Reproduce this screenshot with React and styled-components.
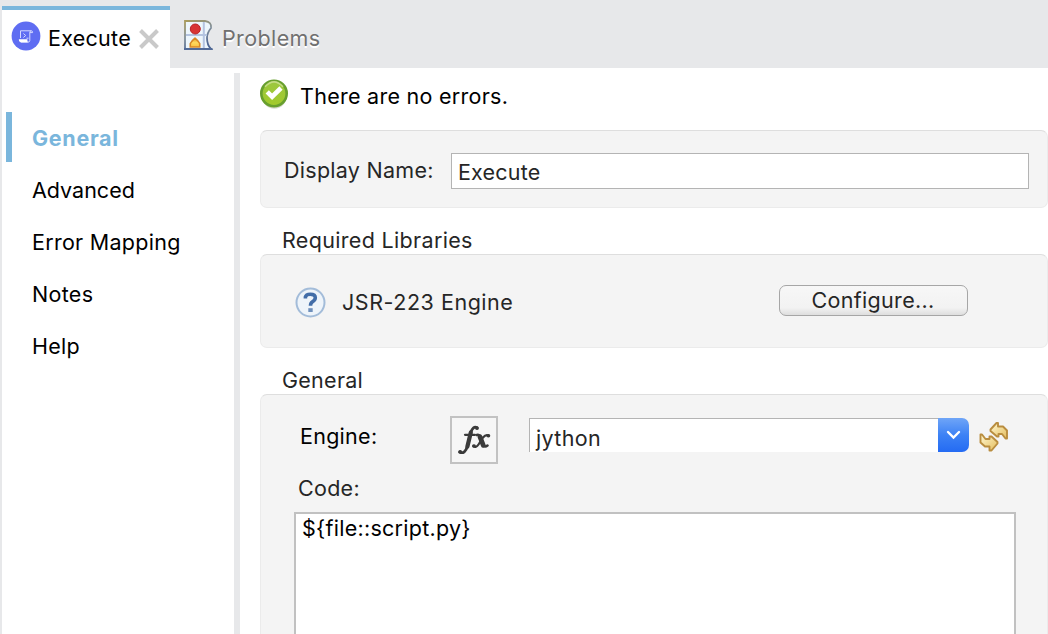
import React from "react";
import styled, { createGlobalStyle } from "styled-components";

const GlobalStyle = createGlobalStyle`
  * { box-sizing: border-box; }
  body { margin: 0; background: #fff; overflow: hidden; }
`;

const Window = styled.div`
  display: flex;
  flex-direction: column;
  width: 1048px;
  height: 634px;
  overflow: hidden;
  border-left: 2px solid #e7e8ea;
  background: #fff;
  font-family: Inter, "Liberation Sans", sans-serif;
  font-size: 21.5px;
  line-height: 26px;
  color: #262626;
`;

const Text = styled.span`
  white-space: nowrap;
  color: ${(p) => p.$color || "inherit"};
  font-weight: ${(p) => (p.$bold ? 700 : 400)};
  letter-spacing: ${(p) => p.$track ?? 0.27}px;
`;

const TabBar = styled.div`
  display: flex;
  flex: none;
  height: 68px;
  padding-top: 6px;
  background: #e7e8ea;
`;

const Tab = styled.div`
  display: flex;
  align-items: flex-start;
  width: ${(p) => (p.$active ? 168 : 200)}px;
  padding: ${(p) => (p.$active ? "11px 0 0 9px" : "13px 0 0 13px")};
  border-top: ${(p) => (p.$active ? "4px solid #7ab6dc" : "0")};
  background: ${(p) => (p.$active ? "#fff" : "transparent")};
  text-shadow: ${(p) => (p.$active ? "none" : "0 2px 0 #fff")};
`;

const TabText = styled(Text)`
  padding: ${(p) => p.$pad};
`;

const CloseIcon = styled.svg`
  flex: none;
  margin: 8px 0 0 8px;
`;

const Body = styled.div`
  display: flex;
  flex: 1;
  min-height: 0;
`;

const Sidebar = styled.nav`
  display: flex;
  flex-direction: column;
  gap: 2px;
  width: 232px;
  padding: 44px 0 0 4px;
`;

const NavItem = styled.div`
  display: flex;
  align-items: center;
  height: 50px;
  padding: 2px 0 0 20px;
  border-left: 6px solid ${(p) => (p.$active ? "#7ab6dc" : "transparent")};
  color: ${(p) => (p.$active ? "#7ab6dc" : "#000")};
`;

const Divider = styled.div`
  width: 6px;
  margin-top: 5px;
  background: #e7e8ea;
`;

const Main = styled.main`
  flex: 1;
  min-width: 0;
  padding: 10px 0 0 20px;
`;

const Status = styled.div`
  display: flex;
  align-items: flex-start;
  gap: 11px;
  height: 52px;
  color: #000;
`;

const StatusText = styled(Text)`
  padding-top: 5px;
`;

const Panel = styled.section`
  height: ${(p) => p.$height}px;
  border: 1px solid #ebebeb;
  border-top-color: #dedede;
  border-radius: 7px;
  background: #f4f4f4;
`;

const PanelTitle = styled.h2`
  display: flex;
  align-items: flex-end;
  height: 46px;
  margin: 0;
  padding: 0 0 1px 22px;
  font-size: inherit;
`;

const Row = styled.div`
  display: flex;
  align-items: flex-start;
  padding: ${(p) => p.$pad};
`;

const Cell = styled.div`
  display: flex;
  flex: none;
  width: ${(p) => p.$width}px;
  padding-top: ${(p) => p.$top || 0}px;
`;

const Field = styled.div`
  width: 578px;
  height: 36px;
  padding: 5px 6px;
  border: 1px solid #b4b4b4;
  background: #fff;
`;

const PushButton = styled.button`
  display: flex;
  align-items: center;
  justify-content: center;
  width: 189px;
  height: 31px;
  padding: 0 1px 1px 0;
  border: 1px solid #a6a6a6;
  border-radius: 7px;
  background: linear-gradient(#f7f7f7 0%, #f2f2f2 75%, #dedede 100%);
  font: inherit;
  color: #262626;
`;

const FxButton = styled.div`
  display: flex;
  width: 48px;
  height: 48px;
  border: 2px solid #c2c2c2;
  background: #f6f6f6;
`;

const Combo = styled.div`
  display: flex;
  width: 440px;
  height: 34px;
`;

const ComboText = styled.div`
  flex: 1;
  padding: 6px 0 0 6px;
  border-top: 1px solid #b4b4b4;
  border-left: 1px solid #b4b4b4;
  background: #fff;
`;

const ComboArrow = styled.div`
  display: flex;
  align-items: center;
  justify-content: center;
  width: 31px;
  border-radius: 0 7px 7px 0;
  background: linear-gradient(#6fa5f7, #3d82f5 50%, #246bf3);
`;

const CodeArea = styled.div`
  width: 722px;
  height: 140px;
  margin: 11px 0 0 33px;
  padding: 1px 6px;
  border: 2px solid #c1c1c1;
  background: #fff;
  color: #000;
`;

const ScriptIcon = () => (
  <svg width="30" height="30" viewBox="0 0 30 30">
    <circle cx="15" cy="15" r="14.4" fill="#5f6df2" />
    <g fill="none" stroke="#d5d9ff" strokeWidth="1">
      <path d="M9.5 17V9.8h10.8q-1.5 0-1.5 1.7v8q0 1.7-2 1.7H10" />
      <path d="M20.3 9.8q1.3 0 1.3 1.8h-2.8M12.4 12.5l2.3 2-2.3 2M15.5 17.2h2" />
    </g>
    <path d="M7.8 18.3h8.6v1.5q0 1.2 1 1.5H9.2q-1.4-.4-1.4-3z" fill="#fff" />
  </svg>
);

const ProblemsIcon = () => (
  <svg width="31" height="32" viewBox="0 0 31 32">
    <defs>
      <linearGradient id="edge" x1="0" y1="0" x2="0.4" y2="1">
        <stop offset="0" stopColor="#a99b5c" />
        <stop offset="0.55" stopColor="#7f8d9a" />
        <stop offset="1" stopColor="#4f6794" />
      </linearGradient>
      <linearGradient id="warn" x1="0" y1="0" x2="0" y2="1">
        <stop offset="0" stopColor="#e39a2a" />
        <stop offset="0.5" stopColor="#ffd95e" />
        <stop offset="1" stopColor="#fbc240" />
      </linearGradient>
    </defs>
    <path d="M2 2H22Q29 3 28 9Q24 14 24 19Q24 26 28 30H2Z" fill="#edf6fc" stroke="url(#edge)" strokeWidth="1.8" />
    <path d="M3 16H24M20.8 3V29" stroke="#b4c4e0" strokeWidth="2" />
    <path d="M1 30H29.5" stroke="#526a97" strokeWidth="2" />
    <circle cx="12.3" cy="10" r="5" fill="#d83434" stroke="#b82228" />
    <path d="M7.3 28V24.5Q8.6 22 12 19.2Q15.4 22 16.7 24.5V28Z" fill="url(#warn)" stroke="#d98826" strokeWidth="1.6" />
  </svg>
);

const CheckIcon = () => (
  <svg width="29" height="31" viewBox="0 0 29 31">
    <defs>
      <linearGradient id="green" x1="0" y1="0" x2="0" y2="1">
        <stop offset="0" stopColor="#9bc740" />
        <stop offset="1" stopColor="#a2ca2b" />
      </linearGradient>
    </defs>
    <ellipse cx="14.3" cy="17.8" rx="12.5" ry="13" fill="#d7d9d0" />
    <circle cx="14" cy="15.5" r="12.7" fill="url(#green)" stroke="#689f2e" strokeWidth="2.6" />
    <path d="M5 8.8Q14-1 23 8.8" fill="none" stroke="#c5dd83" strokeWidth="1.6" />
    <path d="M7.2 13.8l4.9 4.9L21 10" fill="none" stroke="#fff" strokeWidth="4.6" />
  </svg>
);

const HelpIcon = () => (
  <svg width="31" height="31" viewBox="0 0 31 31">
    <circle cx="15.5" cy="15.5" r="14" fill="#eef4fa" stroke="#a3bcd9" strokeWidth="2" />
    <path d="M10.4 11.5V10Q11 7.2 15.3 7.2Q20.3 7.2 20.3 10.8Q20.3 13 17.5 14.7Q15.5 16 15.5 18.8" fill="none" stroke="#426da8" strokeWidth="3.6" />
    <path d="M15.5 21.2v3.8" stroke="#6e8fbb" strokeWidth="4.4" />
  </svg>
);

const FxIcon = () => (
  <svg width="44" height="44" viewBox="0 0 44 44" fill="none" stroke="#3a3a3a" strokeLinecap="round">
    <path d="M25 9.6Q21 7.8 19 14L15.5 28Q13 36.5 7.6 34.2" strokeWidth="2.8" />
    <path d="M18.8 14.5L15.4 28.5" strokeWidth="4.2" />
    <path d="M24.8 10.2h.4M8 33.8h.4" strokeWidth="3.4" />
    <path d="M13 16.8H23" strokeWidth="2.2" />
    <path d="M24.8 17Q27.5 16 28.5 20L30.8 26Q32.2 30 35.5 27.5" strokeWidth="2.6" />
    <path d="M28 18.8L31.3 27.3" strokeWidth="4.8" />
    <path d="M36.5 17.5Q33.8 16 31 19.5L26.5 26.5Q24 30.3 21.5 28.2" strokeWidth="2.2" />
    <path d="M36.2 17.8h.3M21.8 28h.3" strokeWidth="3.6" />
  </svg>
);

const SyncIcon = () => (
  <svg width="30" height="31" viewBox="0 0 30 31">
    <defs>
      <linearGradient id="gold" x1="0" y1="0" x2="1" y2="1">
        <stop offset="0" stopColor="#fff8d2" />
        <stop offset="1" stopColor="#e4bd5d" />
      </linearGradient>
    </defs>
    <g fill="url(#gold)" stroke="#b98d3f" strokeWidth="1.9" strokeLinejoin="round">
      <path d="M11.5 8.5L17.5 2H19V5.5H24L28 9.5V17.5H26.5L23 13H19.5V15.5H18L11.5 10Z" />
      <path d="M18.5 22.5L12.5 29.5H10.5V25.5H6L1.5 21.5V13.5H3L6.5 18H10.5V15.5H12.5L18.5 21Z" />
    </g>
  </svg>
);

const navItems = [
  { label: "General", active: true, track: 0.7 },
  { label: "Advanced", track: 0 },
  { label: "Error Mapping", track: 0.28 },
  { label: "Notes", track: 0.3 },
  { label: "Help", track: 0.25 },
];

export default function App() {
  return (
    <Window>
      <GlobalStyle />
      <TabBar>
        <Tab $active>
          <ScriptIcon />
          <TabText $pad="4px 0 0 7px" $color="#000">Execute</TabText>
          <CloseIcon width="20" height="20" viewBox="0 0 20 20">
            <path d="M1.5 1.5l17 17M18.5 1.5l-17 17" stroke="#c9c9c9" strokeWidth="4" />
          </CloseIcon>
        </Tab>
        <Tab>
          <ProblemsIcon />
          <TabText $pad="6px 0 0 8px" $color="#707070" $track={0.38}>Problems</TabText>
        </Tab>
      </TabBar>
      <Body>
        <Sidebar>
          {navItems.map((item) => (
            <NavItem key={item.label} $active={item.active}>
              <Text $bold={item.active} $track={item.track}>{item.label}</Text>
            </NavItem>
          ))}
        </Sidebar>
        <Divider />
        <Main>
          <Status>
            <CheckIcon />
            <StatusText>There are no errors.</StatusText>
          </Status>
          <Panel $height={78}>
            <Row $pad="22px 0 0 23px">
              <Cell $width={167} $top={4}><Text>Display Name:</Text></Cell>
              <Field><Text $track={0.2}>Execute</Text></Field>
            </Row>
          </Panel>
          <PanelTitle><Text $track={0.33}>Required Libraries</Text></PanelTitle>
          <Panel $height={94}>
            <Row $pad="30px 0 0 34px">
              <Cell $width={47} $top={2}><HelpIcon /></Cell>
              <Cell $width={437} $top={4}><Text $track={0.54}>JSR-223 Engine</Text></Cell>
              <PushButton><Text $track={0.33}>Configure...</Text></PushButton>
            </Row>
          </Panel>
          <PanelTitle><Text>General</Text></PanelTitle>
          <Panel $height={280}>
            <Row $pad="21px 0 0 39px">
              <Cell $width={150} $top={7}><Text $color="#000">Engine:</Text></Cell>
              <Cell $width={79}><FxButton><FxIcon /></FxButton></Cell>
              <Cell $width={450} $top={2}>
                <Combo>
                  <ComboText><Text $track={0.35}>jython</Text></ComboText>
                  <ComboArrow>
                    <svg width="15" height="10" viewBox="0 0 15 10">
                      <path d="M2 2l5.5 5.5L13 2" fill="none" stroke="#fff" strokeWidth="2.4" strokeLinecap="round" />
                    </svg>
                  </ComboArrow>
                </Combo>
              </Cell>
              <Cell $width={30} $top={5}><SyncIcon /></Cell>
            </Row>
            <Row $pad="11px 0 0 37px"><Text>Code:</Text></Row>
            <CodeArea><Text>{"${file::script.py}"}</Text></CodeArea>
          </Panel>
        </Main>
      </Body>
    </Window>
  );
}
